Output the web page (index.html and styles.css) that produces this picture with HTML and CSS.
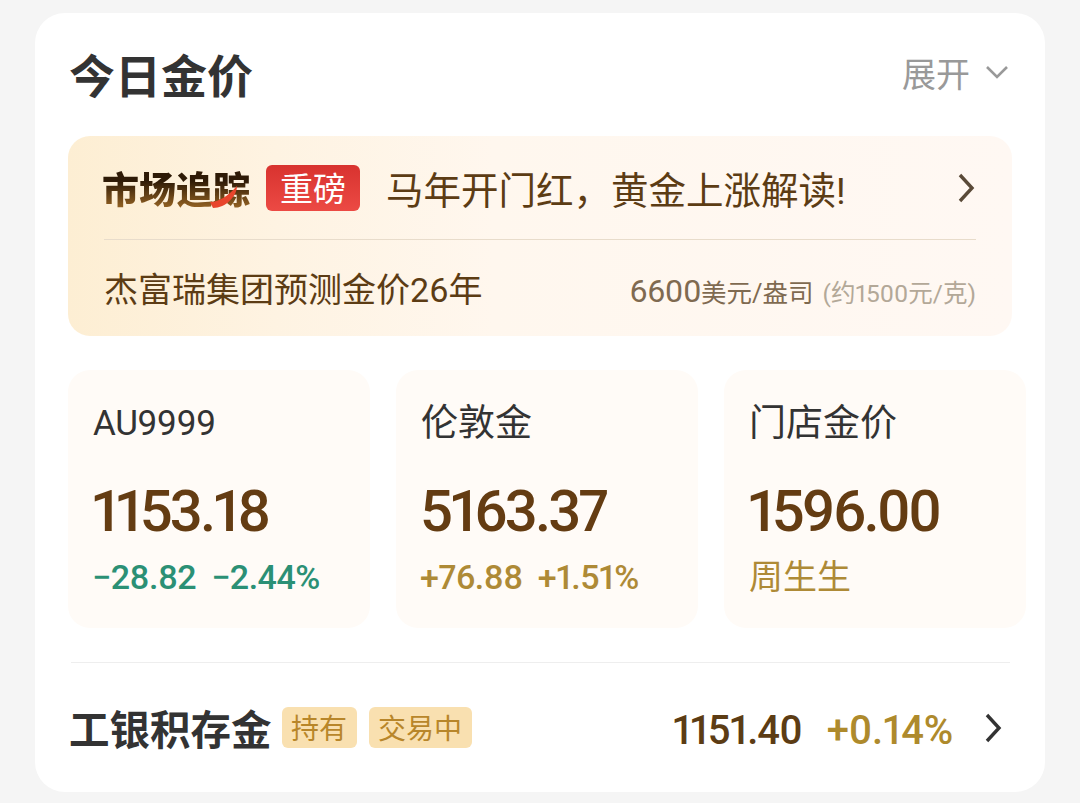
FILE: index.html
```html
<!DOCTYPE html>
<html lang="zh-CN">

<head>
    <meta charset="UTF-8">
    <meta name="viewport" content="width=device-width, initial-scale=1.0">
    <title>今日金价</title>
    <link rel="stylesheet" href="styles.css">
</head>

<body>
    <div class="card">
        <!-- Header -->
        <div class="card-head">
            <h1 class="card-title">今日金价</h1>
            <div class="expand">
                <span>展开</span>
                <svg class="expand-icon" viewBox="0 0 24 14" width="24" height="14">
                    <path d="M2 2 L12 12 L22 2" />
                </svg>
            </div>
        </div>

        <!-- Market banner -->
        <div class="banner">
            <div class="banner-top">
                <div class="logo">
                    <span class="logo-text">市场追踪</span>
                    <svg class="logo-swoosh" viewBox="0 0 28 22" width="28" height="22">
                        <path d="M0 16 C9 16 18 10 27 0 C27 10 16 22 3 22 Z" />
                    </svg>
                </div>
                <span class="badge">重磅</span>
                <span class="banner-title">马年开门红，黄金上涨解读!</span>
                <svg class="chevron banner-chevron" viewBox="0 0 18 30" width="18" height="30">
                    <path d="M3 2 L15 15 L3 28" />
                </svg>
            </div>
            <div class="banner-bottom">
                <span class="forecast">杰富瑞集团预测金价26年</span>
                <span class="target">
                    <span class="target-num">6600</span><span class="target-unit">美元/盎司</span>
                    <span class="target-note">(约1500元/克)</span>
                </span>
            </div>
        </div>

        <!-- Price tiles -->
        <div class="tiles">
            <div class="tile">
                <div class="tile-label tile-label-latin">AU9999</div>
                <div class="tile-value">1153.18</div>
                <div class="tile-change down"><span>−28.82</span><span>−2.44%</span></div>
            </div>
            <div class="tile">
                <div class="tile-label">伦敦金</div>
                <div class="tile-value">5163.37</div>
                <div class="tile-change up"><span>+76.88</span><span>+1.51%</span></div>
            </div>
            <div class="tile">
                <div class="tile-label">门店金价</div>
                <div class="tile-value">1596.00</div>
                <div class="tile-change up tile-shop">周生生</div>
            </div>
        </div>

        <!-- Product row -->
        <div class="product">
            <span class="product-name">工银积存金</span>
            <span class="tag">持有</span>
            <span class="tag">交易中</span>
            <span class="product-price">1151.40</span>
            <span class="product-rate">+0.14%</span>
            <svg class="chevron product-chevron" viewBox="0 0 18 30" width="18" height="30">
                <path d="M3 2 L15 15 L3 28" />
            </svg>
        </div>
    </div>
</body>

</html>
```

FILE: styles.css
```css
* {
    margin: 0;
    padding: 0;
    box-sizing: border-box;
}

body {
    height: 803px;
    padding: 13px 35px 11px;
    overflow: hidden;
    background-color: #f5f5f5;
    font-family: "Roboto", "Noto Sans CJK SC", sans-serif;
    font-variant-numeric: proportional-nums;
    font-feature-settings: "pnum";
}

/* Card */
.card {
    height: 779px;
    padding: 0 33px;
    background-color: #fff;
    border-radius: 30px;
}

.card-head {
    display: flex;
    align-items: center;
    justify-content: space-between;
    height: 123px;
    padding: 0 3px 4px 1px;
}

.card-title {
    font-size: 46px;
    font-weight: 700;
    color: #333;
}

.expand {
    display: flex;
    align-items: center;
    gap: 15px;
    padding-bottom: 1px;
    font-size: 34px;
    color: #999;
}

.expand-icon path,
.chevron path {
    fill: none;
    stroke-width: 3.4;
}

.expand-icon path {
    stroke: #999;
    stroke-width: 2.6;
}

/* Banner */
.banner {
    height: 200px;
    padding: 0 36px;
    border-radius: 22px;
    background: linear-gradient(90deg, #fdeed3 0%, #fef3e2 22%, #fff7ee 45%, #fff8f3 100%);
}

.banner-top {
    display: flex;
    align-items: center;
    height: 104px;
    border-bottom: 1px solid #e8dccb;
}

.logo {
    position: relative;
    width: 148px;
    margin-left: -2px;
    margin-right: 2px;
}

.logo-text {
    font-size: 37px;
    font-weight: 900;
    background: linear-gradient(180deg, #2e1a06 25%, #8f5f22 85%);
    -webkit-background-clip: text;
    background-clip: text;
    color: transparent;
}

.logo-swoosh {
    position: absolute;
    left: 108px;
    top: 25px;
}

.logo-swoosh path {
    fill: #e8452c;
}

.badge {
    margin-left: 14px;
    padding: 0 14px;
    height: 46px;
    line-height: 49px;
    border-radius: 6px;
    background: linear-gradient(180deg, #d8332f, #ec4a44);
    font-size: 33px;
    color: #fff;
}

.banner-title {
    flex: 1;
    margin-left: 26px;
    font-size: 37.5px;
    color: #5c3c14;
}

.chevron path {
    stroke: #5a4a38;
}

.banner-chevron {
    margin-right: 1px;
}

.banner-bottom {
    display: flex;
    align-items: center;
    justify-content: space-between;
    height: 95px;
}

.forecast {
    font-size: 34px;
    color: #5c3c14;
}

.target {
    display: flex;
    align-items: baseline;
    padding-top: 6px;
    color: #7f6a50;
}

.target-num {
    font-size: 32px;
    letter-spacing: -0.5px;
}

.target-unit {
    font-size: 25.5px;
}

.target-note {
    margin-left: 9px;
    font-size: 24.5px;
    color: #b3a898;
}

/* Tiles */
.tiles {
    display: grid;
    grid-template-columns: repeat(3, 302px);
    gap: 26px;
    margin: 34px -14px 34px 0;
}

.tile {
    height: 258px;
    padding: 28px 25px 0;
    border-radius: 22px;
    background-color: #fffbf7;
}

.tile-label {
    height: 52px;
    font-size: 37px;
    line-height: 52px;
    color: #333;
}

.tile-label-latin {
    font-size: 35px;
    letter-spacing: -0.4px;
}

.tile-value {
    margin-top: 30px;
    margin-left: -1px;
    font-size: 58px;
    line-height: 62px;
    font-weight: 500;
    letter-spacing: -2.8px;
    color: #643c12;
}

.tile-change {
    display: flex;
    gap: 15px;
    margin-top: 14px;
    margin-left: -1px;
    font-size: 34px;
    font-weight: 500;
    line-height: 42px;
    letter-spacing: -0.5px;
}

.down {
    color: #2b9075;
}

.up {
    color: #ae8a36;
}

.tile-shop {
    margin-left: 0;
    font-weight: 400;
    letter-spacing: 0;
}

/* Product row */
.product {
    display: flex;
    align-items: center;
    height: 130px;
    margin-left: 3px;
    margin-right: 2px;
    border-top: 1px solid #eeeeee;
}

.product-name {
    margin-left: -2px;
    margin-right: 10px;
    font-size: 40.5px;
    font-weight: 700;
    color: #333;
}

.tag {
    margin-right: 12px;
    padding: 0 9.5px;
    height: 41px;
    line-height: 45px;
    border-radius: 6px;
    background-color: #f9e0b0;
    font-size: 28px;
    color: #b8862a;
}

.product-price,
.product-rate {
    padding-top: 5px;
    font-size: 40px;
    font-weight: 500;
}

.product-price {
    margin-left: auto;
    letter-spacing: -0.9px;
    color: #5c3c14;
}

.product-rate {
    margin-left: 25px;
    letter-spacing: -0.2px;
    color: #ae8a2c;
}

.product-chevron {
    margin-left: 31px;
    margin-right: 8px;
}

.product-chevron path {
    stroke: #333;
}
```
